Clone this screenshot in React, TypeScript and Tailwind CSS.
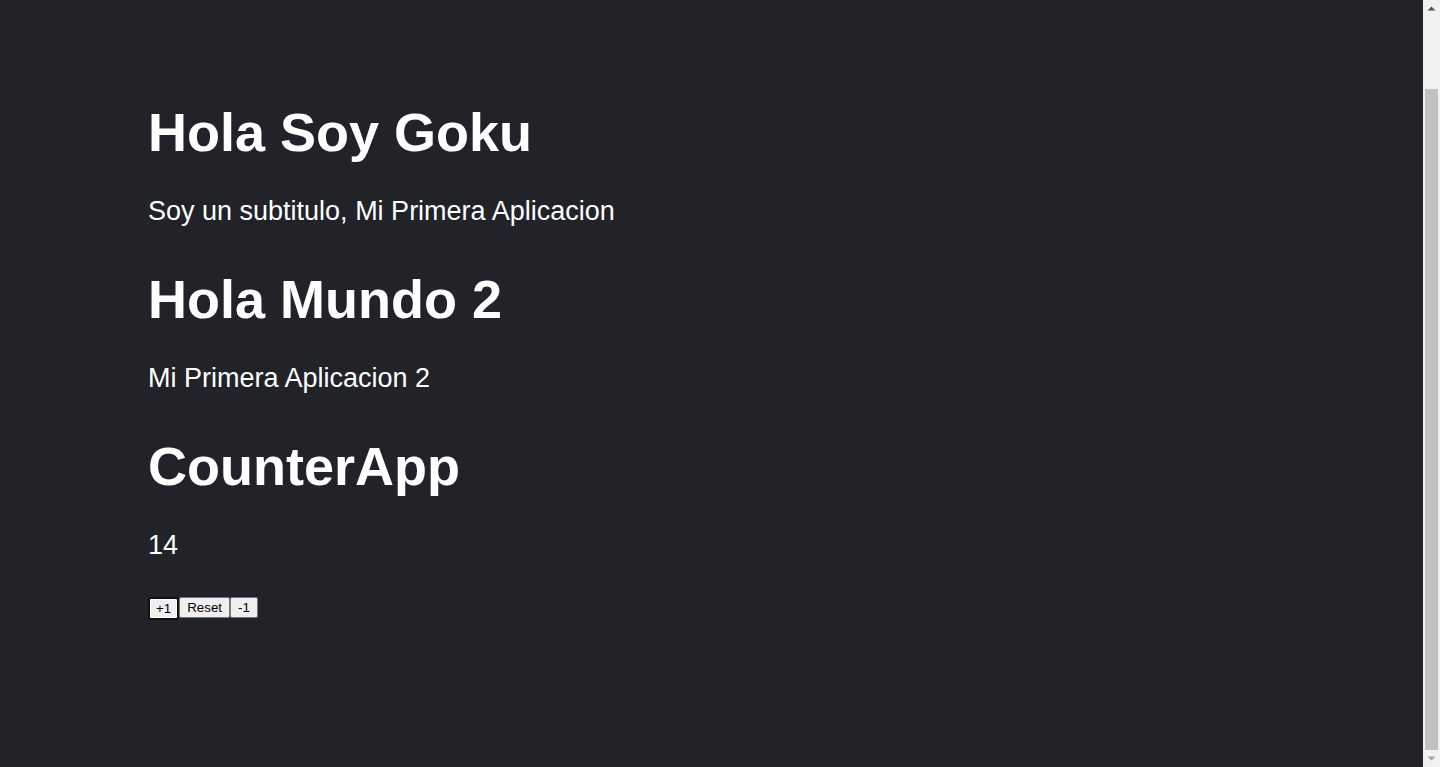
import { useState } from 'react'

const font = { fontFamily: '"Liberation Sans", Arial, sans-serif' }

function Scrollbar() {
  return (
    <aside className="flex h-screen w-[17px] shrink-0 flex-col bg-[#f1f1f1]">
      <div className="flex h-[17px] items-center justify-center">
        <svg width="9" height="5" viewBox="0 0 9 5">
          <path d="M0.5 4.5 L4.5 0.5 L8.5 4.5 Z" fill="#505050" />
        </svg>
      </div>
      <div className="flex flex-1 flex-col justify-end px-[2px]">
        <div className="h-[661px] bg-[#c1c1c1]" />
      </div>
      <div className="flex h-[17px] items-center justify-center">
        <svg width="9" height="5" viewBox="0 0 9 5">
          <path d="M0.5 0.5 L4.5 4.5 L8.5 0.5 Z" fill="#a3a3a3" />
        </svg>
      </div>
    </aside>
  )
}

function CounterApp({ value }: { value: number }) {
  const [counter, setCounter] = useState(value)

  return (
    <>
      <h1 className="mt-[41px] text-[54px] font-bold leading-[62px]">CounterApp</h1>
      <p className="mt-[33px] text-[27px] leading-[31px]">{counter}</p>
      <div className="mt-[36px] flex items-start text-[13.33px] leading-[15px] text-black">
        <button
          onClick={() => setCounter(counter + 1)}
          className="rounded-[3px] border-2 border-[#101010] bg-[#efefef] px-[6px] py-[2px] shadow-[inset_0_0_0_1px_white]"
        >
          +1
        </button>
        <button
          onClick={() => setCounter(value)}
          className="rounded-[2px] border border-[#767676] bg-[#efefef] px-[7px] py-[2px]"
        >
          Reset
        </button>
        <button
          onClick={() => setCounter(counter - 1)}
          className="rounded-[2px] border border-[#767676] bg-[#efefef] px-[7px] py-[2px]"
        >
          -1
        </button>
      </div>
    </>
  )
}

export default function App() {
  return (
    <div className="flex h-screen w-full overflow-hidden bg-[#212329]" style={font}>
      <main className="flex flex-1 flex-col items-start pl-[148px] pt-[101px] text-white">
        <h1 className="text-[54px] font-bold leading-[62px]">Hola Soy Goku</h1>
        <p className="mt-[33px] text-[27px] leading-[31px]">Soy un subtitulo, Mi Primera Aplicacion</p>
        <h1 className="mt-[41px] text-[54px] font-bold leading-[62px]">Hola Mundo 2</h1>
        <p className="mt-[33px] text-[27px] leading-[31px]">Mi Primera Aplicacion 2</p>
        <CounterApp value={14} />
      </main>
      <Scrollbar />
    </div>
  )
}
